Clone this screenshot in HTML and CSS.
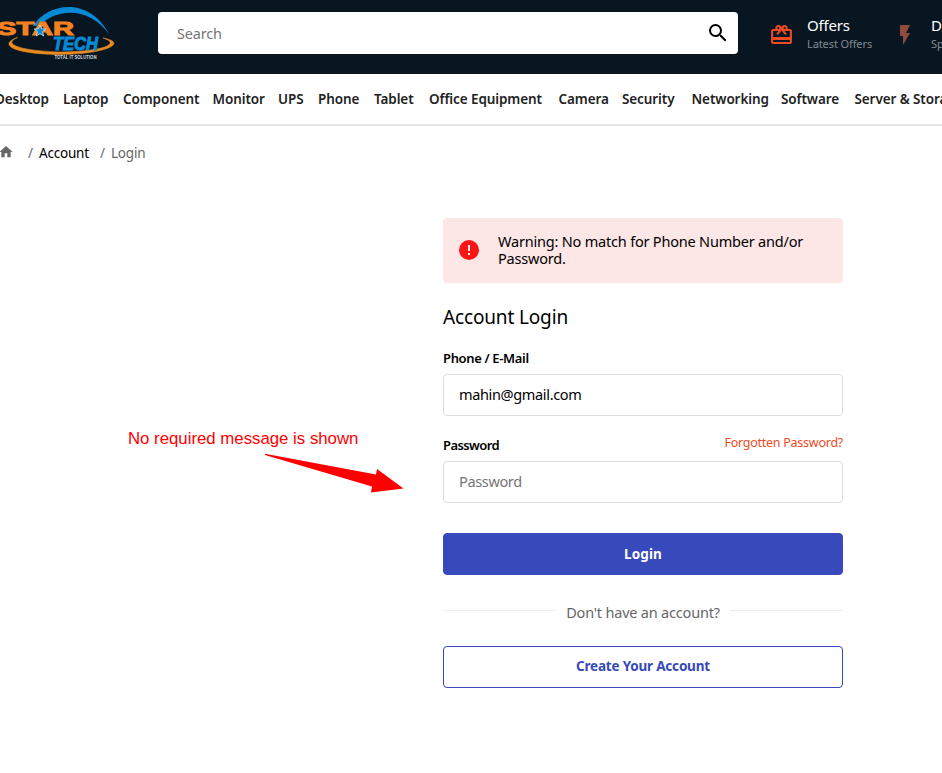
FILE: index.html
```html
<!DOCTYPE html>
<html lang="en">
<head>
<meta charset="utf-8">
<title>Account Login</title>
<link rel="stylesheet" href="styles.css">
</head>
<body>
<header class="top">
  <a class="logo" href="#">
    <svg width="120" height="64" viewBox="0 0 120 64" role="img" aria-label="Star Tech">
      <path d="M33 26C47 3.500 88-5 109.500 34.500C89 6 56 8 39 26Z" fill="#0789d5"/>
      <path d="M17.500 37.500C-1 44 10 53 55 54.500C104 55 130 43 103 38C122 44 102 52 57 52C14 50 4 43 17.500 37.500Z" fill="#e98b22" stroke="#e98b22" stroke-width=".6"/>
      <text class="logo-star" x="-3" y="35" textLength="77" lengthAdjust="spacingAndGlyphs">STAR</text>
      <path d="M40 25l1.600 3.800 4.200.3-3.200 2.700 1 4.100-3.600-2.200-3.600 2.200 1-4.100-3.200-2.700 4.200-.3z" fill="#0789d5" stroke="#dce6ea" stroke-width=".8"/>
      <text class="logo-tech" x="53" y="49.500" textLength="45" lengthAdjust="spacingAndGlyphs">TECH</text>
      <text class="logo-tag" x="54.500" y="59" textLength="42" lengthAdjust="spacingAndGlyphs">TOTAL IT SOLUTION</text>
    </svg>
  </a>
  <form class="search">
    <input type="text" placeholder="Search" aria-label="Search">
    <svg width="24" height="24" viewBox="0 0 24 24"><path d="M15.500 14h-.79l-.28-.27A6.470 6.470 0 0 0 16 9.500 6.500 6.500 0 1 0 9.500 16c1.610 0 3.090-.59 4.230-1.570l.27.28v.79l5 4.990L20.490 19l-4.990-5zm-6 0C7.010 14 5 11.990 5 9.500S7.010 5 9.500 5 14 7.010 14 9.500 11.990 14 9.500 14z"/></svg>
  </form>
  <a class="action offers" href="#">
    <svg width="25" height="24" viewBox="0 0 24 24" preserveAspectRatio="none" fill="#ef4a23"><path d="M20 6h-2.180c.11-.31.18-.65.18-1a2.996 2.996 0 0 0-5.500-1.650l-.5.670-.5-.68C10.960 2.540 10.050 2 9 2 7.340 2 6 3.340 6 5c0 .35.070.69.180 1H4c-1.110 0-1.990.89-1.990 2L2 19c0 1.110.89 2 2 2h16c1.110 0 2-.89 2-2V8c0-1.110-.89-2-2-2zm-5-2c.55 0 1 .45 1 1s-.45 1-1 1-1-.45-1-1 .45-1 1-1zM9 4c.55 0 1 .45 1 1s-.45 1-1 1-1-.45-1-1 .45-1 1-1zm11 15H4v-2h16v2zm0-5H4V8h5.080L7 10.830 8.620 12 11 8.760l1-1.360 1 1.360L15.380 12 17 10.830 14.920 8H20v6z"/></svg>
    <span><b>Offers</b><small>Latest Offers</small></span>
  </a>
  <a class="action deals" href="#">
    <svg width="24" height="24" viewBox="0 0 24 24" fill="#8f4b3d"><path d="M7 2v11h3v9l7-12h-4l4-8z"/></svg>
    <span><b>Deals</b><small>Special Deals</small></span>
  </a>
</header>
<nav class="menu">
  <a>Desktop</a><a>Laptop</a><a>Component</a><a>Monitor</a><a>UPS</a><a>Phone</a><a>Tablet</a><a>Office Equipment</a><a>Camera</a><a>Security</a><a>Networking</a><a>Software</a><a>Server &amp; Storage</a>
</nav>
<div class="crumbs">
  <svg width="16" height="16" viewBox="0 0 24 24" fill="#666"><path d="M10 20v-6h4v6h5v-8h3L12 3 2 12h3v8z"/></svg>
  <i>/</i><a>Account</a><i>/</i><span>Login</span>
</div>
<main class="stage">
  <form class="login">
    <div class="alert">
      <svg width="24" height="24" viewBox="0 0 24 24" fill="#f91616"><path d="M12 2a10 10 0 1 0 0 20 10 10 0 0 0 0-20zm1 15h-2v-2h2v2zm0-4h-2V7h2v6z"/></svg>
      <p>Warning: No match for Phone Number and/or<br>Password.</p>
    </div>
    <h1>Account Login</h1>
    <div class="row"><label for="email">Phone / E-Mail</label></div>
    <input id="email" type="text" value="mahin@gmail.com">
    <div class="row second"><label for="pw">Password</label><a class="forgot">Forgotten Password?</a></div>
    <input id="pw" type="password" placeholder="Password">
    <button type="button" class="btn primary">Login</button>
    <div class="divider"><span>Don't have an account?</span></div>
    <button type="button" class="btn outline">Create Your Account</button>
  </form>
  <div class="note">
    <span>No required message is shown</span>
    <svg width="140" height="42" viewBox="0 0 140 42"><path d="M0 .8L111 21.500 112 16 138.500 35.500 106 39.500 107 33.500 0 2Z" fill="red"/></svg>
  </div>
</main>
</body>
</html>
```
FILE: styles.css
```css
* { box-sizing: border-box; }
body { margin: 0; width: 942px; height: 773px; overflow: hidden; background: #fff; color: #000; font-family: "Trebuchet MS", "Noto Sans", sans-serif; font-size: 14.5px; letter-spacing: -.2px; }
a { color: inherit; text-decoration: none; white-space: nowrap; }
.top { display: flex; height: 74px; background: #081621; overflow: hidden; }
.logo { flex: none; width: 158px; letter-spacing: 0; }
.logo svg { display: block; }
.logo-star { font: bold 17.5px "Liberation Sans", sans-serif; fill: #f58220; stroke: #f58220; stroke-width: .9px; }
.logo-tech { font: italic bold 17.5px "Liberation Sans", sans-serif; fill: #0789d5; stroke: #0789d5; stroke-width: 1px; }
.logo-tag { font: bold 5px "Liberation Sans", sans-serif; fill: #d5dade; }
.search { flex: none; display: flex; align-items: center; width: 580px; height: 42px; margin-top: 12px; padding-right: 8px; background: #fff; border-radius: 4px; }
.search input { flex: 1; border: 0; outline: 0; background: none; padding: 0 19px; font: inherit; letter-spacing: -.2px; }
input::placeholder { color: #757575; opacity: 1; }
.action { flex: none; display: flex; color: #fff; padding-top: 16px; }
.action svg { margin-top: 7px; }
.action b, .action small { display: block; width: max-content; }
.action b { font-size: 15px; line-height: 18px; font-weight: 400; }
.action small { font-size: 11px; line-height: 19px; letter-spacing: -.1px; color: #838a90; }
.offers { width: 124px; margin-left: 31px; gap: 13px; }
.deals { gap: 14px; }
.menu { display: grid; grid-template-columns: 68px 60px 89.5px 65.5px 40px 56px 55px 129.5px 63.5px 69.5px 89.5px 73.5px 110px; height: 52px; padding-top: 15px; margin-left: -5px; width: 947px; overflow: hidden; border-bottom: 2px solid #e6e6e6; font-size: 13.5px; line-height: 20px; font-weight: 600; letter-spacing: -.1px; color: #222; }
.crumbs { display: flex; margin: 17px 0 0 -2px; height: 20px; line-height: 20px; font-size: 13.5px; color: #666; }
.crumbs svg { margin: 1px 13px 0 0; }
.crumbs a { color: #000; width: 61px; }
.crumbs i { font-style: normal; width: 12px; }
.crumbs i:first-of-type { padding-left: 1px; }
.crumbs i + span { margin-left: -1px; }
.stage { display: flex; flex-direction: row-reverse; justify-content: flex-end; padding-top: 55px; }
.login { width: 400px; flex: none; }
.alert { display: flex; align-items: center; height: 65px; padding: 0 14px 2px; gap: 17px; border-radius: 4px; background: #fde6e6; line-height: 17px; }
.alert svg { flex: none; }
.alert p { margin: 0; white-space: nowrap; }
h1 { margin: 21px 0 0; font-size: 19px; line-height: 26px; font-weight: 400; letter-spacing: -.15px; }
.row { display: flex; justify-content: space-between; height: 16px; margin: 20px 0 8px; line-height: 16px; font-size: 13px; }
.row label { font-weight: 600; letter-spacing: -.35px; }
.row.second { margin-top: 21px; }
.second label { letter-spacing: -.6px; }
.forgot { color: #ef4a23; font-size: 12.5px; letter-spacing: -.25px; margin-top: -2px; }
.login input { display: block; width: 400px; height: 42px; border: 1px solid #ddd; border-radius: 4px; padding: 0 15px 2px; font: inherit; letter-spacing: -.35px; outline: 0; }
.btn { display: block; width: 400px; height: 42px; border-radius: 4px; border: 1px solid #3749bb; font: inherit; font-weight: 700; padding: 0 0 2px; font-size: 13.5px; letter-spacing: -.2px; }
.primary { margin-top: 30px; padding-bottom: 0; background: #3749bb; color: #fff; letter-spacing: .1px; }
.outline { background: #fff; color: #3749bb; }
.divider { display: flex; align-items: center; gap: 10px; height: 71px; color: #666; white-space: nowrap; }
.divider span { padding-top: 2px; }
.divider::before, .divider::after { content: ""; flex: 1; height: 1px; background: #eee; }
.note { width: 443px; flex: none; padding: 210px 0 0 128px; font: 16.8px/21px "Liberation Sans", sans-serif; letter-spacing: 0; color: red; }
.note span { display: block; white-space: nowrap; }
.note svg { display: block; margin: 4px 0 0 137px; }
```
